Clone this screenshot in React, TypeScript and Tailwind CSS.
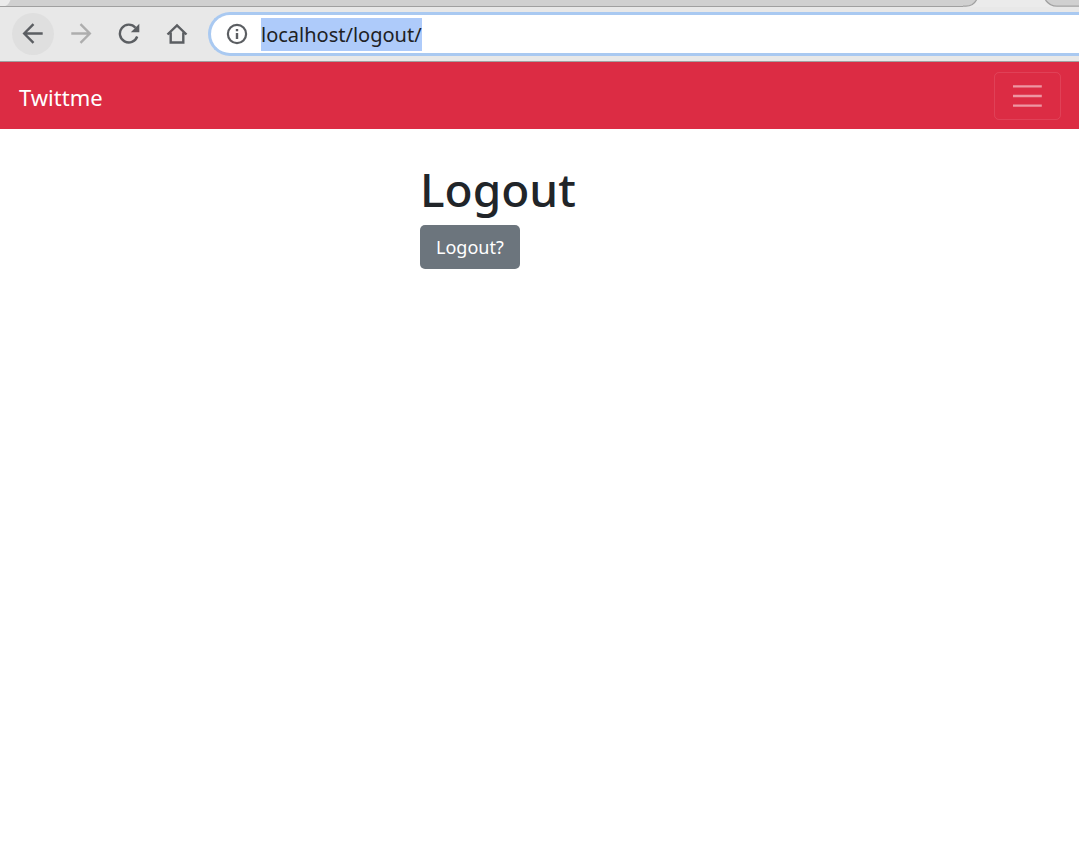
import { useEffect, useRef } from 'react';

/** Strip of background tabs with the active tab cut out between them */
function TabStrip() {
  return (
    <div className="flex h-[7px] overflow-hidden bg-[#ebebeb]">
      <svg width="12" height="7" viewBox="0 0 12 7" className="shrink-0">
        <path d="M12 0H10.500C9 3.500 7.500 5.500 4 6.500H12Z" fill="#d0d0d0" />
        <path d="M0 6.500H12" stroke="#a0a0a0" />
      </svg>
      <div className="grow border-b border-[#a0a0a0] bg-[#d0d0d0]" />
      <svg width="16" height="7" viewBox="0 0 16 7" className="shrink-0">
        <path d="M0 0H13.500C11.500 3 8 5.800 3 5.800H0Z" fill="#d0d0d0" />
        <path d="M0 6.200H3C8 6.200 11.500 3.500 13.500 0" fill="none" stroke="#a0a0a0" strokeWidth="1.300" />
      </svg>
      <div className="w-16 shrink-0" />
      <svg width="36" height="7" viewBox="0 0 36 7" className="shrink-0">
        <path d="M2.500 0C5 3.500 8 5.800 14 5.800H36V0Z" fill="#d0d0d0" />
        <path d="M2.500 0C5 3.500 8 6.200 14 6.200H36" fill="none" stroke="#a0a0a0" strokeWidth="1.300" />
      </svg>
    </div>
  );
}

function Toolbar() {
  const urlRef = useRef<HTMLInputElement>(null);

  // The address starts out focused and fully selected
  useEffect(() => {
    urlRef.current?.focus();
    urlRef.current?.select();
  }, []);

  return (
    <div className="flex h-[55px] items-center border-b border-[#a0a0a0] bg-[#e8e8e8] pl-3 text-[#5b5e62]">
      <div className="flex shrink-0 items-center gap-[6px]">
        <button type="button" aria-label="Back" className="flex size-[42px] items-center justify-center rounded-full bg-[#dfdfdf]">
          <svg width="22" height="22" viewBox="0 0 22 22" fill="none" stroke="currentColor" strokeWidth="2.400">
            <path d="M20.700 10.500H2.500M11.500 1.200L2.200 10.500l9.300 9.300" />
          </svg>
        </button>
        <button type="button" aria-label="Forward" className="flex size-[42px] items-center justify-center rounded-full text-[#adadad]">
          <svg width="22" height="22" viewBox="0 0 22 22" fill="none" stroke="currentColor" strokeWidth="2.400">
            <path d="M1.300 10.500H19.500M10.500 1.200L19.800 10.500l-9.300 9.300" />
          </svg>
        </button>
        <button type="button" aria-label="Reload" className="flex size-[42px] items-center justify-center rounded-full">
          <svg width="22" height="22" viewBox="0 0 22 22" fill="none">
            <path d="M17.500 4.700A8.900 8.900 0 1 0 19.200 13.500" stroke="currentColor" strokeWidth="2.400" />
            <path d="M21.300 0.700V9.200H12.800Z" fill="currentColor" />
          </svg>
        </button>
        <button type="button" aria-label="Home" className="flex size-[42px] items-center justify-center rounded-full">
          <svg width="22" height="22" viewBox="0 0 22 22" fill="none" stroke="currentColor" strokeWidth="2.400">
            <path d="M1.500 11.500L11 2.300l9.500 9.200M4.700 9.500V19.500H17.300V9.500" />
          </svg>
        </button>
      </div>
      <label className="ml-[10px] flex h-11 grow items-center rounded-l-full border-[3px] border-r-0 border-[#a9c9f1] bg-white pl-[15px]">
        <svg width="22" height="22" viewBox="0 0 22 22" fill="none" className="shrink-0">
          <circle cx="11" cy="11" r="9.100" stroke="currentColor" strokeWidth="2.200" />
          <path d="M11 10V16M11 6V8.200" stroke="currentColor" strokeWidth="2.400" />
        </svg>
        <input
          ref={urlRef}
          type="text"
          aria-label="Address"
          defaultValue="localhost/logout/"
          className="ml-[13px] h-[33px] min-w-0 grow text-[20px] leading-[33px] text-[#202124] outline-none selection:bg-[#aecbfa] selection:text-[#202124]"
        />
      </label>
    </div>
  );
}

function Navbar() {
  return (
    <nav className="flex items-center justify-between bg-[#dc2c44] pt-[10px] pr-[18px] pb-[9px] pl-[19px]">
      <a href="/" className="pt-[2px] text-[22px] leading-[36px] text-white">
        Twittme
      </a>
      <button
        type="button"
        aria-label="Toggle navigation"
        className="flex h-12 w-[67px] items-center justify-center rounded-[5px] border border-white/10"
      >
        <svg width="36" height="36" viewBox="0 0 30 30" fill="none" stroke="#fff" strokeOpacity="0.5">
          <path d="M2.500 7h24M2.500 15h24M2.500 23h24" strokeWidth="2" />
        </svg>
      </button>
    </nav>
  );
}

export default function App() {
  return (
    <div className="min-h-screen bg-white font-['Noto_Sans',sans-serif]">
      <TabStrip />
      <Toolbar />
      <Navbar />
      <main className="mx-auto w-full max-w-[239px] pt-8">
        <h1 className="text-[46px] leading-[56px] font-medium text-[#212529]">Logout</h1>
        <form className="mt-2" onSubmit={(e) => e.preventDefault()}>
          <button type="submit" className="h-11 rounded-[5px] bg-[#6c757d] px-4 text-[18px] leading-7 text-white">
            Logout?
          </button>
        </form>
      </main>
    </div>
  );
}
